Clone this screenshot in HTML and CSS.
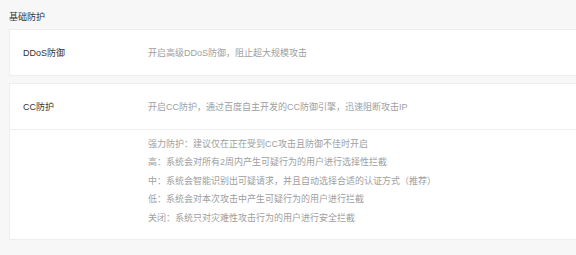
FILE: index.html
```html
<!DOCTYPE html>
<html lang="zh-CN">
<head>
<meta charset="utf-8">
<title>基础防护</title>
<link rel="stylesheet" href="styles.css">
</head>
<body>
<div class="page">
  <div class="section-title">基础防护</div>
  <div class="card">
    <div class="row">
      <div class="label">DDoS防御</div>
      <div class="desc">开启高级DDoS防御，阻止超大规模攻击</div>
    </div>
  </div>
  <div class="card">
    <div class="row">
      <div class="label">CC防护</div>
      <div class="desc">开启CC防护，通过百度自主开发的CC防御引擎，迅速阻断攻击IP</div>
    </div>
    <div class="details">
      <p>强力防护：建议仅在正在受到CC攻击且防御不佳时开启</p>
      <p>高：系统会对所有2周内产生可疑行为的用户进行选择性拦截</p>
      <p>中：系统会智能识别出可疑请求，并且自动选择合适的认证方式（推荐）</p>
      <p>低：系统会对本次攻击中产生可疑行为的用户进行拦截</p>
      <p>关闭：系统只对灾难性攻击行为的用户进行安全拦截</p>
    </div>
  </div>
</div>
</body>
</html>
```
FILE: styles.css
```css
html, body {
  margin: 0;
  padding: 0;
  background: #f7f7f7;
  overflow: hidden;
}
body {
  font-family: "Liberation Sans", "Noto Sans CJK SC", sans-serif;
  font-size: 9px;
  color: #333;
}
.page {
  padding: 8px 0 0 9px;
}
.section-title {
  line-height: 18px;
  height: 18px;
  margin-bottom: 3px;
  color: #333;
}
.card {
  background: #fff;
  border: 1px solid #eeeeee;
  border-right: none;
  margin-bottom: 7px;
}
.row {
  display: grid;
  grid-template-columns: 138px 1fr;
  align-items: center;
  height: 45px;
}
.label {
  padding-left: 13px;
  color: #333;
}
.desc {
  color: #a0a0a0;
}
.details {
  border-top: 1px solid #eeeeee;
  height: 110px;
  box-sizing: border-box;
  padding: 5px 0 0 138px;
  color: #a0a0a0;
}
.details p {
  margin: 0;
  line-height: 18.4px;
}
```
